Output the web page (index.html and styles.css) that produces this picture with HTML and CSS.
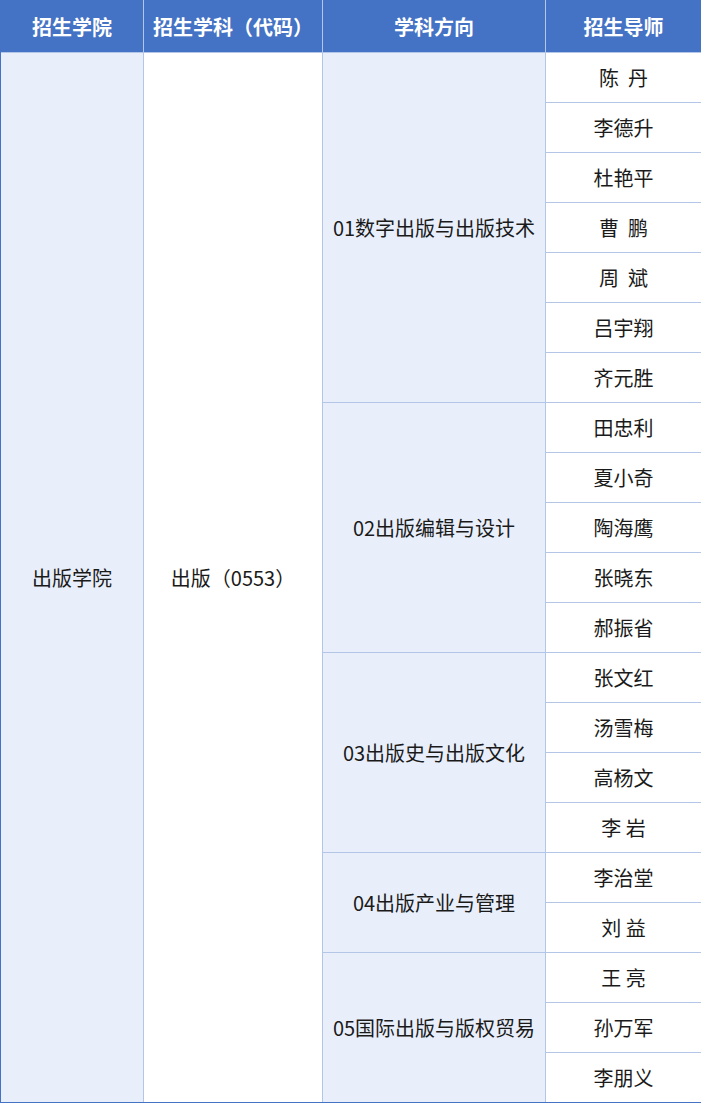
FILE: index.html
```html
<!DOCTYPE html>
<html lang="zh">
<head>
<meta charset="utf-8">
<link rel="stylesheet" href="styles.css">
</head>
<body>
<table class="t">
<colgroup><col class="c1"><col class="c2"><col class="c3"><col class="c4"></colgroup>
<thead>
<tr><th>招生学院</th><th>招生学科（代码）</th><th>学科方向</th><th>招生导师</th></tr>
</thead>
<tbody>
<tr><td rowspan="21" class="lt">出版学院</td><td rowspan="21" class="wh">出版（0553）</td><td rowspan="7" class="lt">01数字出版与出版技术</td><td>陈  丹</td></tr>
<tr><td>李德升</td></tr>
<tr><td>杜艳平</td></tr>
<tr><td>曹  鹏</td></tr>
<tr><td>周  斌</td></tr>
<tr><td>吕宇翔</td></tr>
<tr><td>齐元胜</td></tr>
<tr><td rowspan="5" class="lt">02出版编辑与设计</td><td>田忠利</td></tr>
<tr><td>夏小奇</td></tr>
<tr><td>陶海鹰</td></tr>
<tr><td>张晓东</td></tr>
<tr><td>郝振省</td></tr>
<tr><td rowspan="4" class="lt">03出版史与出版文化</td><td>张文红</td></tr>
<tr><td>汤雪梅</td></tr>
<tr><td>高杨文</td></tr>
<tr><td>李 岩</td></tr>
<tr><td rowspan="2" class="lt">04出版产业与管理</td><td>李治堂</td></tr>
<tr><td>刘 益</td></tr>
<tr><td rowspan="3" class="lt">05国际出版与版权贸易</td><td>王 亮</td></tr>
<tr><td>孙万军</td></tr>
<tr><td>李朋义</td></tr>
</tbody>
</table>
</body>
</html>
```
FILE: styles.css
```css
html, body { margin: 0; padding: 0; background: #ffffff; }
body { font-family: "Noto Sans CJK SC", "Noto Sans", sans-serif; }
.t {
  width: 701px;
  border-collapse: collapse;
  table-layout: fixed;
  border: 1px solid #4472c4;
  border-top: none;
}
.c1 { width: 143px; }
.c2 { width: 179px; }
.c3 { width: 223px; }
.c4 { width: 156px; }
.t th {
  background: #4472c4;
  color: #ffffff;
  font-weight: 700;
  font-size: 20px;
  height: 52px;
  padding: 0;
  border-left: 1px solid #b4c6e7;
  border-right: 1px solid #b4c6e7;
  border-top: none;
  text-align: center;
  vertical-align: middle;
}
.t th:first-child { border-left: 1px solid #4472c4; }
.t th:last-child { border-right: 1px solid #4472c4; }
.t td {
  height: 49px;
  padding: 0;
  font-size: 20px;
  color: #1a1a1a;
  text-align: center;
  vertical-align: middle;
  border: 1px solid #b4c6e7;
  white-space: pre;
  background: #ffffff;
}
.t td.lt { background: #e9effa; }
.t td.wh { background: #ffffff; }
.t tr td:first-child { border-left-color: #4472c4; }
.t tr td:last-child { border-right-color: #4472c4; }
.t tbody tr:last-child td { border-bottom-color: #4472c4; }
.t td[rowspan="21"] { border-bottom-color: #4472c4; }
.t td.lt[rowspan="3"] { border-bottom-color: #4472c4; }
```
